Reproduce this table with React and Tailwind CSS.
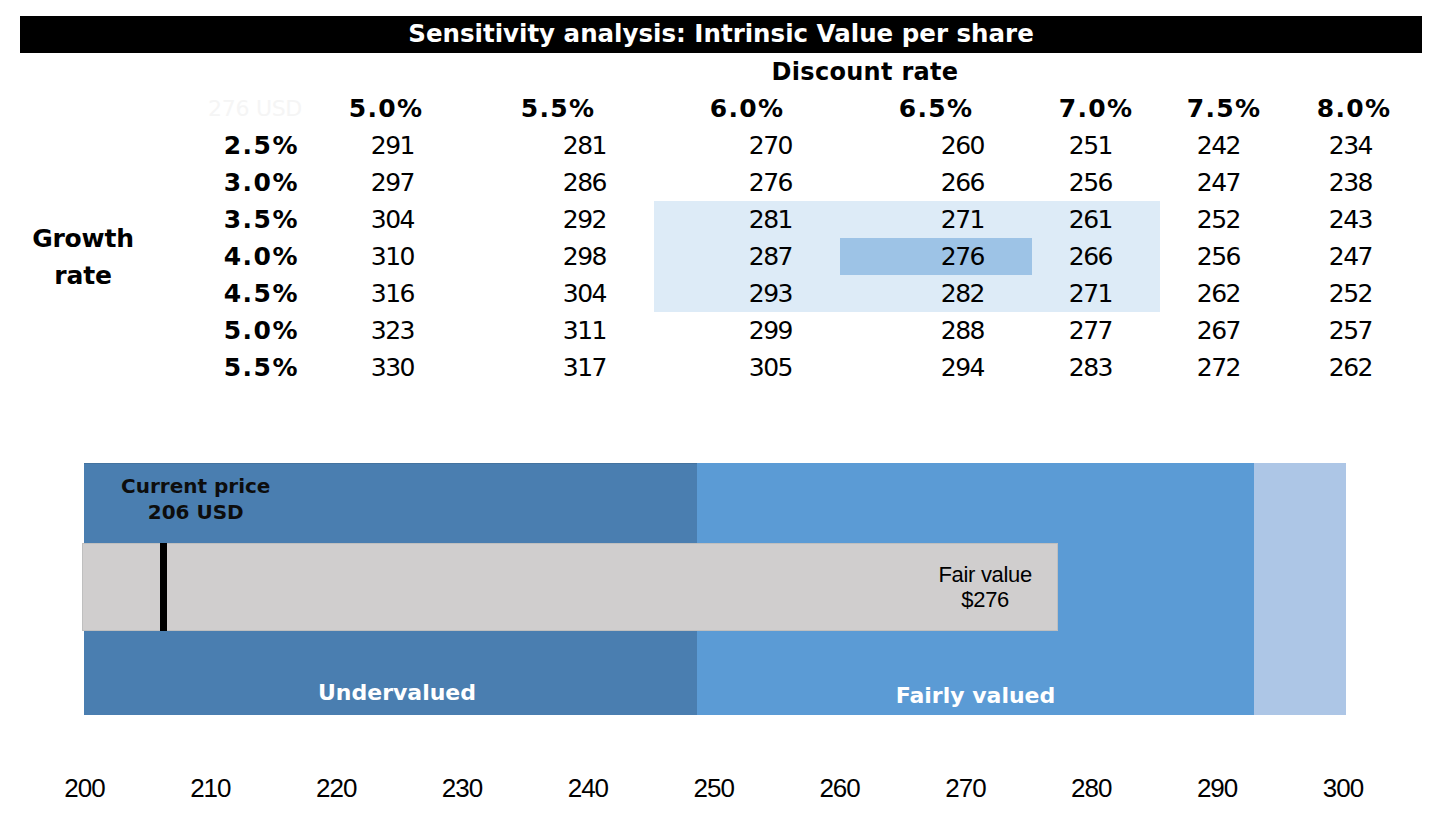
import React from "react";

const cols = ["5.0%", "5.5%", "6.0%", "6.5%", "7.0%", "7.5%", "8.0%"];
const rows = [
  ["2.5%", [291, 281, 270, 260, 251, 242, 234]],
  ["3.0%", [297, 286, 276, 266, 256, 247, 238]],
  ["3.5%", [304, 292, 281, 271, 261, 252, 243]],
  ["4.0%", [310, 298, 287, 276, 266, 256, 247]],
  ["4.5%", [316, 304, 293, 282, 271, 262, 252]],
  ["5.0%", [323, 311, 299, 288, 277, 267, 257]],
  ["5.5%", [330, 317, 305, 294, 283, 272, 262]],
];

function cellBg(r, c) {
  if (r === 3 && c === 3) return "bg-[#9dc3e6]";
  if (r >= 2 && r <= 4 && c >= 2 && c <= 4) return "bg-[#ddebf7]";
  return "";
}

const axis = [200, 210, 220, 230, 240, 250, 260, 270, 280, 290, 300];

export default function App() {
  return (
    <div className="w-[1456px] h-[827px] bg-white overflow-hidden pt-[16px] text-black">
      <div className="ml-[20px] w-[1402px] h-[37px] bg-black flex items-center justify-center text-white font-bold text-[24.5px] leading-none font-['DejaVu_Sans',sans-serif]">
        Sensitivity analysis: Intrinsic Value per share
      </div>

      <div className="ml-[20px] grid grid-cols-[126px_164px_152px_192px_186px_192px_128px_128px_132px] auto-rows-[37px] font-['DejaVu_Sans',sans-serif]">
        <div className="col-start-3 col-span-7 flex items-center justify-center font-bold text-[24px] tracking-[0.3px] leading-none">
          Discount rate
        </div>

        <div></div>
        <div className="flex items-center justify-end pr-[8px] text-[22px] tracking-[-0.3px] text-[#f5f5f5] leading-none">
          276 USD
        </div>
        {cols.map((c) => (
          <div key={c} className="flex items-center justify-center font-bold text-[25px] tracking-[1.3px] leading-none">
            {c}
          </div>
        ))}

        <div className="row-span-7 flex items-center justify-center text-center font-bold text-[25px] leading-[37px] tracking-[-0.2px]">
          Growth
          <br />
          rate
        </div>
        {rows.map(([label, vals], r) => (
          <React.Fragment key={label}>
            <div className="flex items-center justify-end pr-[11px] font-bold text-[25px] tracking-[1.5px] leading-none">
              {label}
            </div>
            {vals.map((v, c) => (
              <div
                key={c}
                className={`flex items-center justify-end pr-[48px] text-[25px] tracking-[-1.5px] leading-none ${cellBg(r, c)}`}
              >
                {v}
              </div>
            ))}
          </React.Fragment>
        ))}
      </div>

      <div className="mt-[77px] ml-[84px] w-[1262px] h-[252px] relative flex">
        <div className="w-[613px] h-full bg-[#4a7eb0] flex flex-col justify-between border-t border-[#44739f]">
          <div className="ml-[37px] mt-[9px] self-start flex flex-col items-center font-['DejaVu_Sans',sans-serif] font-bold text-[20px] leading-[26px] text-[#0d0d0d]">
            <span>Current price</span>
            <span>206 USD</span>
          </div>
          <div className="pl-[13px] pb-[9px] text-center font-['DejaVu_Sans',sans-serif] font-bold text-[22px] leading-[26px] text-white">
            Undervalued
          </div>
        </div>
        <div className="w-[557px] h-full bg-[#5b9bd5] flex flex-col justify-end">
          <div className="pb-[6px] text-center font-['DejaVu_Sans',sans-serif] font-bold text-[22px] leading-[26px] text-white">
            Fairly valued
          </div>
        </div>
        <div className="flex-1 h-full bg-[#adc6e6]"></div>

        <div className="absolute left-[-2px] top-[80px] w-[976px] h-[88px] bg-[#d0cece] border border-[#bfbfbf] flex items-center justify-end pr-[25px]">
          <div className="text-center font-['Liberation_Sans',sans-serif] text-[22px] leading-[25px] tracking-[-0.3px] text-black">
            Fair value
            <br />
            $276
          </div>
        </div>
        <div className="absolute left-[76px] top-[80px] w-[7px] h-[88px] bg-black"></div>
      </div>

      <div className="mt-[58px] ml-[21.6px] flex">
        {axis.map((a) => (
          <div
            key={a}
            className="w-[125.85px] shrink-0 flex justify-center font-['Liberation_Sans',sans-serif] text-[26px] leading-[30px] tracking-[-1px]"
          >
            {a}
          </div>
        ))}
      </div>
    </div>
  );
}
